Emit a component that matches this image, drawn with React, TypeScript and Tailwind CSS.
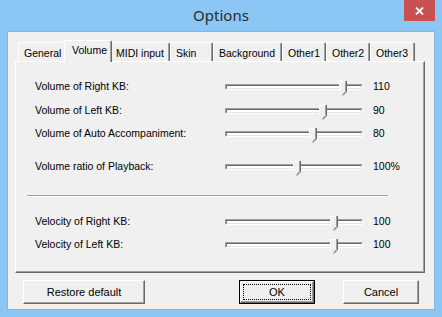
import React from "react";

const tabs = [
  { name: "General", w: "w-[48px]" },
  { name: "Volume", w: "w-[48px]", active: true },
  { name: "MIDI input", w: "w-[60px]" },
  { name: "Skin", w: "w-[43px]" },
  { name: "Background", w: "w-[69px]" },
  { name: "Other1", w: "w-[44px]" },
  { name: "Other2", w: "w-[44px]" },
  { name: "Other3", w: "w-[45px]" },
];

const Thumb = () => (
  <svg width="8" height="15" viewBox="0 0 8 15" className="absolute top-[-3px]">
    <path d="M0.5 0.5 H6.5 V10.5 L3.5 13.5 L0.5 10.5 Z" fill="#f0f0f0" />
    <path d="M0.5 10.5 V0.5 H6" stroke="#ffffff" fill="none" />
    <path d="M6.5 0 V10.5 L3.5 13.5" stroke="#a0a0a0" fill="none" />
    <path d="M7.5 0 V10.8 L3.8 14.5" stroke="#696969" fill="none" />
  </svg>
);

const Slider = ({ pos }: { pos: string }) => (
  <div className="relative w-[138px] h-[6px]">
    <div className="h-[6px] border-t border-l border-t-[#a0a0a0] border-l-[#a0a0a0] border-b border-r border-b-white border-r-white">
      <div className="h-[4px] bg-white border-t border-l border-t-[#696969] border-l-[#696969] border-b border-r border-b-[#e3e3e3] border-r-[#e3e3e3]" />
    </div>
    <div className={`absolute top-0 ${pos}`}>
      <Thumb />
    </div>
  </div>
);

const Row = ({
  label,
  value,
  pos,
  className = "",
}: {
  label: string;
  value: string;
  pos: string;
  className?: string;
}) => (
  <div className={`flex items-center h-[22px] pl-[19px] ${className}`}>
    <div className="w-[190px]">{label}</div>
    <Slider pos={pos} />
    <div className="ml-[10px]">{value}</div>
  </div>
);

const Button = ({
  label,
  w,
  primary = false,
}: {
  label: string;
  w: string;
  primary?: boolean;
}) =>
  primary ? (
    <div className={`${w} h-[24px] border border-black bg-[#f0f0f0]`}>
      <div className="h-full border-t border-l border-white border-r border-b border-r-[#696969] border-b-[#696969] shadow-[inset_-1px_-1px_0_#a0a0a0] flex items-center justify-center p-[2px]">
        <div className="w-full h-full border border-dotted border-black flex items-center justify-center">
          {label}
        </div>
      </div>
    </div>
  ) : (
    <div
      className={`${w} h-[24px] bg-[#f0f0f0] border-t border-l border-white border-r border-b border-r-[#696969] border-b-[#696969] shadow-[inset_-1px_-1px_0_#a0a0a0] flex items-center justify-center`}
    >
      {label}
    </div>
  );

export default function App() {
  return (
    <div
      className="w-[442px] h-[317px] bg-[#8bc6f4] flex flex-col px-[7px] pb-[7px] text-black"
      style={{ fontFamily: '"Liberation Sans", Arial, sans-serif' }}
    >
      <div className="relative h-[31px] flex items-center justify-center">
        <span
          className="text-[15px] text-[#2b2b2b] pb-[1px]"
          style={{ fontFamily: '"Noto Sans", "Open Sans", sans-serif' }}
        >
          Options
        </span>
        <div className="absolute right-0 top-0 w-[31px] h-[21px] bg-[#c75050] flex items-center justify-center">
          <svg width="9" height="8" viewBox="0 0 9 8">
            <path d="M1 0.5 L8 7.5 M8 0.5 L1 7.5" stroke="#ffffff" strokeWidth="1.8" />
          </svg>
        </div>
      </div>

      <div className="flex-1 bg-[#f0f0f0] border border-[#7fb6e2] flex flex-col text-[10.5px]">
        <div className="flex items-end h-[29px] pl-[10px] pt-[7px]">
          {tabs.map((t) =>
            t.active ? (
              <div
                key={t.name}
                className={`${t.w} relative z-10 -mx-[2px] mb-[-1px] h-[22px] bg-[#f0f0f0] border-t border-l border-white border-r border-r-[#696969] rounded-t-[2px] pl-[7px] pt-[2px] shadow-[inset_-1px_0_0_#a0a0a0]`}
              >
                {t.name}
              </div>
            ) : (
              <div
                key={t.name}
                className={`${t.w} h-[19px] border-t border-l border-white border-r border-r-[#696969] rounded-t-[2px] pl-[5px] pt-[3px] shadow-[inset_-1px_0_0_#a0a0a0]`}
              >
                {t.name}
              </div>
            )
          )}
        </div>

        <div className="ml-[7px] w-[410px] h-[212px] border-t border-l border-white border-r border-b border-r-[#696969] border-b-[#696969] shadow-[inset_-1px_-1px_0_#a0a0a0] pt-[14px]">
          <Row label="Volume of Right KB:" value="110" pos="left-[114px]" />
          <Row label="Volume of Left KB:" value="90" pos="left-[94px]" className="mt-[2px]" />
          <Row
            label="Volume of Auto Accompaniment:"
            value="80"
            pos="left-[84px]"
            className="mt-[1px]"
          />
          <Row
            label="Volume ratio of Playback:"
            value="100%"
            pos="left-[68px]"
            className="mt-[11px]"
          />
          <div className="ml-[11px] w-[361px] mt-[17px] border-t border-[#a0a0a0] border-b border-b-white" />
          <Row
            label="Velocity of Right KB:"
            value="100"
            pos="left-[105px]"
            className="mt-[14px]"
          />
          <Row
            label="Velocity of Left KB:"
            value="100"
            pos="left-[105px]"
            className="mt-[1px]"
          />
        </div>

        <div className="flex mt-[7px] pl-[15px] text-[11px]">
          <Button label="Restore default" w="w-[122px]" />
          <div className="ml-[94px]">
            <Button label="OK" w="w-[76px]" primary />
          </div>
          <div className="ml-[28px]">
            <Button label="Cancel" w="w-[76px]" />
          </div>
        </div>
      </div>
    </div>
  );
}
